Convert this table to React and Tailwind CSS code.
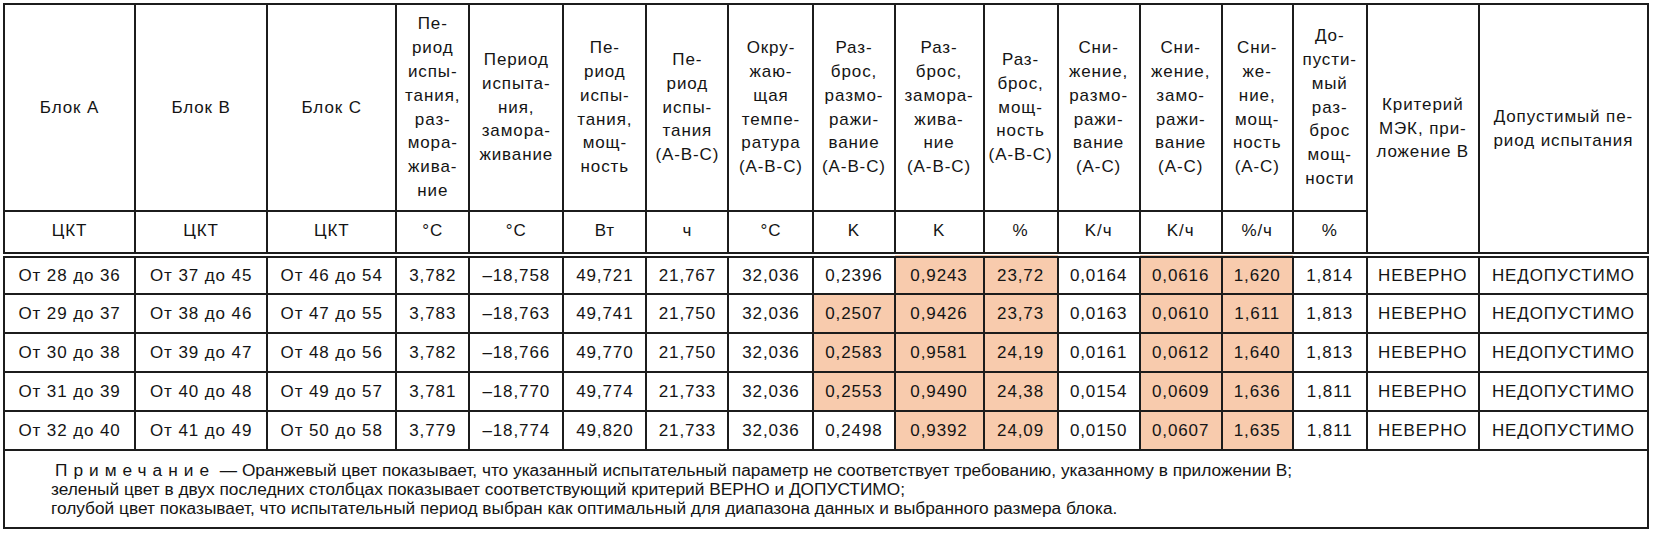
import React from "react";

const cols = [131, 132, 129, 73, 94, 83, 82, 85, 81, 89, 74, 82, 82, 71, 74, 112, 169];

const headers = [
  ["Блок А"],
  ["Блок В"],
  ["Блок С"],
  ["Пе-", "риод", "испы-", "тания,", "раз-", "мора-", "жива-", "ние"],
  ["Период", "испыта-", "ния,", "замора-", "живание"],
  ["Пе-", "риод", "испы-", "тания,", "мощ-", "ность"],
  ["Пе-", "риод", "испы-", "тания", "(А-В-С)"],
  ["Окру-", "жаю-", "щая", "темпе-", "ратура", "(А-В-С)"],
  ["Раз-", "брос,", "размо-", "ражи-", "вание", "(А-В-С)"],
  ["Раз-", "брос,", "замора-", "жива-", "ние", "(А-В-С)"],
  ["Раз-", "брос,", "мощ-", "ность", "(А-В-С)"],
  ["Сни-", "жение,", "размо-", "ражи-", "вание", "(А-С)"],
  ["Сни-", "жение,", "замо-", "ражи-", "вание", "(А-С)"],
  ["Сни-", "же-", "ние,", "мощ-", "ность", "(А-С)"],
  ["До-", "пусти-", "мый", "раз-", "брос", "мощ-", "ности"],
];

const units = ["ЦКТ", "ЦКТ", "ЦКТ", "°C", "°C", "Вт", "ч", "°C", "K", "K", "%", "K/ч", "K/ч", "%/ч", "%"];

const rows = [
  { v: ["От 28 до 36", "От 37 до 45", "От 46 до 54", "3,782", "–18,758", "49,721", "21,767", "32,036", "0,2396", "0,9243", "23,72", "0,0164", "0,0616", "1,620", "1,814"], hot: [9, 10, 12, 13] },
  { v: ["От 29 до 37", "От 38 до 46", "От 47 до 55", "3,783", "–18,763", "49,741", "21,750", "32,036", "0,2507", "0,9426", "23,73", "0,0163", "0,0610", "1,611", "1,813"], hot: [8, 9, 10, 12, 13] },
  { v: ["От 30 до 38", "От 39 до 47", "От 48 до 56", "3,782", "–18,766", "49,770", "21,750", "32,036", "0,2583", "0,9581", "24,19", "0,0161", "0,0612", "1,640", "1,813"], hot: [8, 9, 10, 12, 13] },
  { v: ["От 31 до 39", "От 40 до 48", "От 49 до 57", "3,781", "–18,770", "49,774", "21,733", "32,036", "0,2553", "0,9490", "24,38", "0,0154", "0,0609", "1,636", "1,811"], hot: [8, 9, 10, 12, 13] },
  { v: ["От 32 до 40", "От 41 до 49", "От 50 до 58", "3,779", "–18,774", "49,820", "21,733", "32,036", "0,2498", "0,9392", "24,09", "0,0150", "0,0607", "1,635", "1,811"], hot: [9, 10, 12, 13] },
];

export default function App() {
  return (
    <div className="bg-white pt-[3px] pl-[3px] min-h-[533px] text-[#141414] font-['Liberation_Sans',Arial,sans-serif]">
      <table className="table-fixed border-collapse w-[1646px] border-2 border-[#1c1c1c]">
        <colgroup>
          {cols.map((w, i) => (
            <col key={i} style={{ width: w }} />
          ))}
        </colgroup>
        <thead>
          <tr className="h-[207px]">
            {headers.map((lines, i) => (
              <th key={i} className="border-2 border-[#1c1c1c] font-normal text-[17px] leading-[23.8px] tracking-[0.9px] text-center align-middle p-0">
                {lines.map((l, j) => (
                  <div key={j}>{l}</div>
                ))}
              </th>
            ))}
            <th rowSpan={2} className="border-2 border-b-[6px] [border-bottom-style:double] border-[#1c1c1c] font-normal text-[17px] leading-[23.8px] tracking-[0.9px] text-center align-middle p-0">
              <div>Критерий</div>
              <div>МЭК, при-</div>
              <div>ложение В</div>
            </th>
            <th rowSpan={2} className="border-2 border-b-[6px] [border-bottom-style:double] border-[#1c1c1c] font-normal text-[17px] leading-[23.8px] tracking-[0.9px] text-center align-middle p-0">
              <div>Допустимый пе-</div>
              <div>риод испытания</div>
            </th>
          </tr>
          <tr className="h-[44px]">
            {units.map((u, i) => (
              <th key={i} className="border-2 border-b-[6px] [border-bottom-style:double] border-[#1c1c1c] font-normal text-[17px] tracking-[0.9px] text-center align-middle p-0 pb-[3px]">
                {u}
              </th>
            ))}
          </tr>
        </thead>
        <tbody>
          {rows.map((r, ri) => (
            <tr key={ri} className="h-[39px]">
              {r.v.map((c, ci) => (
                <td
                  key={ci}
                  className={
                    "border-2 border-[#1c1c1c] text-[17px] tracking-[0.9px] text-center align-middle p-0 whitespace-nowrap " +
                    (r.hot.includes(ci) ? "bg-[#f8cbad]" : "bg-white")
                  }
                >
                  {c}
                </td>
              ))}
              <td className="border-2 border-[#1c1c1c] text-[17px] tracking-[0.9px] text-center align-middle p-0">НЕВЕРНО</td>
              <td className="border-2 border-[#1c1c1c] text-[17px] tracking-[0.9px] text-center align-middle p-0">НЕДОПУСТИМО</td>
            </tr>
          ))}
          <tr className="h-[78px]">
            <td colSpan={17} className="border-2 border-[#1c1c1c] text-[17.3px] leading-[19px] text-left align-middle pl-[46px]">
              <div className="pl-[4px]">
                <span className="tracking-[6px]">Примечание</span> — Оранжевый цвет показывает, что указанный испытательный параметр не соответствует требованию, указанному в приложении В;
              </div>
              <div>зеленый цвет в двух последних столбцах показывает соответствующий критерий ВЕРНО и ДОПУСТИМО;</div>
              <div>голубой цвет показывает, что испытательный период выбран как оптимальный для диапазона данных и выбранного размера блока.</div>
            </td>
          </tr>
        </tbody>
      </table>
    </div>
  );
}
